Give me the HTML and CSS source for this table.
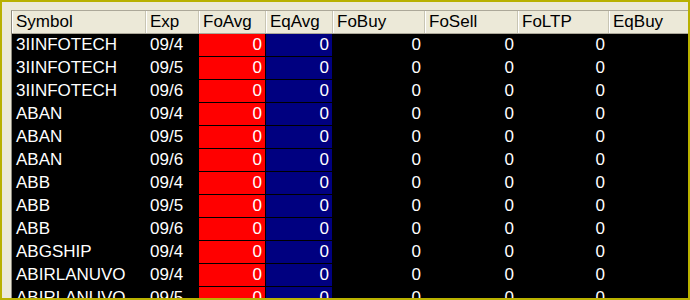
FILE: index.html
```html
<!DOCTYPE html>
<html>
<head>
<meta charset="utf-8">
<link rel="stylesheet" href="styles.css">
</head>
<body>
<div class="frame">
  <div class="list">
    <div class="row head">
      <div class="hc">Symbol</div>
      <div class="hc">Exp</div>
      <div class="hc">FoAvg</div>
      <div class="hc">EqAvg</div>
      <div class="hc">FoBuy</div>
      <div class="hc">FoSell</div>
      <div class="hc">FoLTP</div>
      <div class="hc">EqBuy</div>
    </div>
    <div class="row"><div class="c">3IINFOTECH</div><div class="c">09/4</div><div class="c n red">0</div><div class="c n blue">0</div><div class="c n">0</div><div class="c n">0</div><div class="c n">0</div><div class="c n"></div></div>
    <div class="row"><div class="c">3IINFOTECH</div><div class="c">09/5</div><div class="c n red">0</div><div class="c n blue">0</div><div class="c n">0</div><div class="c n">0</div><div class="c n">0</div><div class="c n"></div></div>
    <div class="row"><div class="c">3IINFOTECH</div><div class="c">09/6</div><div class="c n red">0</div><div class="c n blue">0</div><div class="c n">0</div><div class="c n">0</div><div class="c n">0</div><div class="c n"></div></div>
    <div class="row"><div class="c">ABAN</div><div class="c">09/4</div><div class="c n red">0</div><div class="c n blue">0</div><div class="c n">0</div><div class="c n">0</div><div class="c n">0</div><div class="c n"></div></div>
    <div class="row"><div class="c">ABAN</div><div class="c">09/5</div><div class="c n red">0</div><div class="c n blue">0</div><div class="c n">0</div><div class="c n">0</div><div class="c n">0</div><div class="c n"></div></div>
    <div class="row"><div class="c">ABAN</div><div class="c">09/6</div><div class="c n red">0</div><div class="c n blue">0</div><div class="c n">0</div><div class="c n">0</div><div class="c n">0</div><div class="c n"></div></div>
    <div class="row"><div class="c">ABB</div><div class="c">09/4</div><div class="c n red">0</div><div class="c n blue">0</div><div class="c n">0</div><div class="c n">0</div><div class="c n">0</div><div class="c n"></div></div>
    <div class="row"><div class="c">ABB</div><div class="c">09/5</div><div class="c n red">0</div><div class="c n blue">0</div><div class="c n">0</div><div class="c n">0</div><div class="c n">0</div><div class="c n"></div></div>
    <div class="row"><div class="c">ABB</div><div class="c">09/6</div><div class="c n red">0</div><div class="c n blue">0</div><div class="c n">0</div><div class="c n">0</div><div class="c n">0</div><div class="c n"></div></div>
    <div class="row"><div class="c">ABGSHIP</div><div class="c">09/4</div><div class="c n red">0</div><div class="c n blue">0</div><div class="c n">0</div><div class="c n">0</div><div class="c n">0</div><div class="c n"></div></div>
    <div class="row"><div class="c">ABIRLANUVO</div><div class="c">09/4</div><div class="c n red">0</div><div class="c n blue">0</div><div class="c n">0</div><div class="c n">0</div><div class="c n">0</div><div class="c n"></div></div>
    <div class="row"><div class="c">ABIRLANUVO</div><div class="c">09/5</div><div class="c n red">0</div><div class="c n blue">0</div><div class="c n">0</div><div class="c n">0</div><div class="c n">0</div><div class="c n"></div></div>
  </div>
</div>
</body>
</html>
```

FILE: styles.css
```css
html, body {
  margin: 0;
  padding: 0;
  background: #ece9d8;
}
.frame {
  width: 690px;
  height: 300px;
  box-sizing: border-box;
  border: 2px solid #b9b100;
  background: #ece9d8;
  padding: 8px 0 0 9px;
  overflow: hidden;
}
.list {
  width: 760px;
  height: 400px;
  background: #000;
  border-left: 1px solid #8d8a7e;
  border-top: 1px solid #aca899;
  font-family: "Liberation Sans", Arial, sans-serif;
  font-size: 17px;
}
.row {
  display: grid;
  grid-template-columns: 134px 53px 67px 67px 92px 93px 91px 160px;
  height: 23px;
}
.head {
  background: #ece9d8;
  height: 22px;
  border-bottom: 1px solid #aca899;
}
.hc {
  color: #000;
  line-height: 22px;
  padding-left: 4px;
  border-right: 1px solid #c8c5b4;
  box-shadow: inset 1px 0 0 #ffffff;
  white-space: nowrap;
  overflow: hidden;
}
.c {
  color: #fff;
  line-height: 22px;
  height: 22px;
  padding-left: 4px;
  border-right: 1px solid #000;
  border-bottom: 1px solid #000;
  white-space: nowrap;
  overflow: hidden;
}
.n {
  text-align: right;
  padding-left: 0;
  padding-right: 3px;
}
.red {
  background: #ff0000;
}
.blue {
  background: #000080;
}
```
